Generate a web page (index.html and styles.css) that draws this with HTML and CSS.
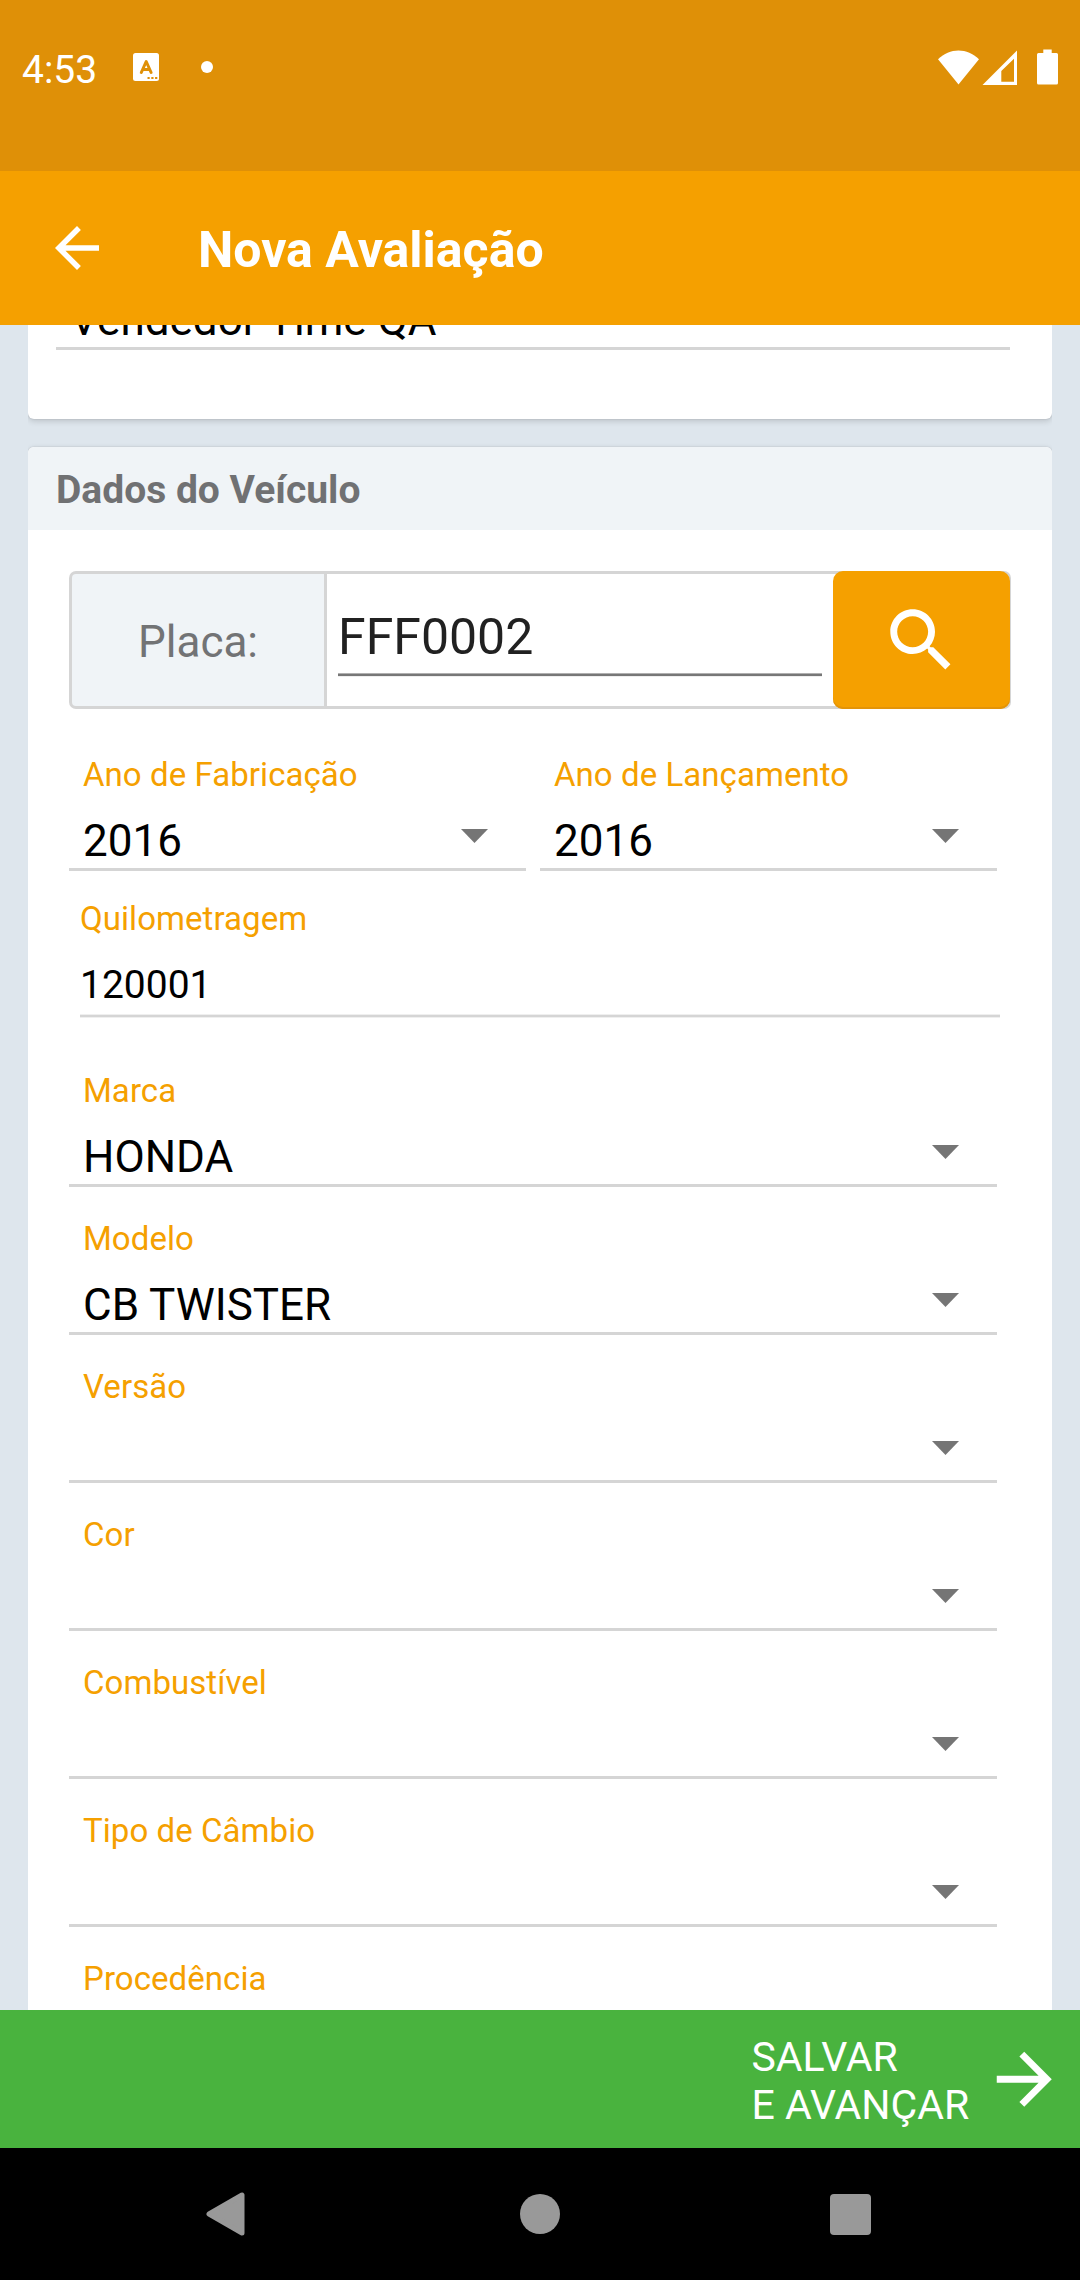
FILE: index.html
```html
<!DOCTYPE html>
<html lang="pt-BR">
<head>
<meta charset="utf-8">
<title>Nova Avaliação</title>
<link rel="stylesheet" href="styles.css">
</head>
<body>
<div class="screen">
  <header class="status-bar">
    <span class="clock">4:53</span>
    <svg class="status-app" width="26" height="28" viewBox="0 0 26 28">
      <rect width="26" height="28" rx="2.5" fill="#fff"/>
      <path d="M8.3 19.5 13.2 8.5 18.1 19.5M10 16.4H16.4" fill="none" stroke="#df9007" stroke-width="3" stroke-linejoin="round" stroke-linecap="round"/>
      <path d="M14.5 24h2.2v2h-2.2zM18.3 24h2.2v2h-2.2zM22.1 24h2.2v2h-2.2z" fill="#df9007"/>
    </svg>
    <span class="status-dot"></span>
    <svg class="status-icons" width="122" height="36" viewBox="0 0 122 36" fill="#fff">
      <path d="M0 10.3C6 4.500 13 1.500 20.500 1.500S35 4.500 41 10.300L20.500 35.500z"/>
      <path fill-rule="evenodd" d="M79 1.500V36H44.500zM76 9.700 63.300 22V32.700H76z"/>
      <path d="M105.300.5h8.400V4H118.500Q120 4 120 5.500V34Q120 35.500 118.500 35.500H100.500Q99 35.500 99 34V5.500Q99 4 100.500 4h4.800z"/>
    </svg>
  </header>
  <nav class="app-bar">
    <svg width="66" height="66" viewBox="0 0 24 24" fill="#fff"><path d="M20 11H7.830l5.590-5.590L12 4l-8 8 8 8 1.410-1.410L7.830 13H20z"/></svg>
    <h1 class="title">Nova Avaliação</h1>
  </nav>
  <main class="content">
    <section class="card card-seller">
      <div class="seller">Vendedor Time QA</div>
    </section>
    <section class="card card-vehicle">
      <h2 class="card-title">Dados do Veículo</h2>
      <div class="plate">
        <div class="plate-label">Placa:</div>
        <div class="plate-entry"><div class="plate-value">FFF0002</div></div>
        <div class="plate-button">
          <svg width="82.500" height="82.500" viewBox="0 0 24 24" fill="#fff"><path d="M15.500 14h-.79l-.28-.27C15.410 12.590 16 11.110 16 9.500 16 5.910 13.090 3 9.500 3S3 5.910 3 9.500 5.910 16 9.500 16c1.610 0 3.090-.59 4.230-1.570l.27.28v.79l5 4.990L20.490 19l-4.990-5zm-6 0C7.010 14 5 11.990 5 9.500S7.010 5 9.500 5 14 7.010 14 9.500 11.990 14 9.500 14z"/></svg>
        </div>
      </div>
      <div class="fields">
        <div class="field-row">
          <div class="field"><span class="label">Ano de Fabricação</span><div class="value">2016<i class="caret"></i></div></div>
          <div class="field"><span class="label">Ano de Lançamento</span><div class="value">2016<i class="caret"></i></div></div>
        </div>
        <div class="mileage"><span class="label">Quilometragem</span><div class="mileage-value">120001</div></div>
        <div class="field"><span class="label">Marca</span><div class="value">HONDA<i class="caret"></i></div></div>
        <div class="field"><span class="label">Modelo</span><div class="value">CB TWISTER<i class="caret"></i></div></div>
        <div class="field"><span class="label">Versão</span><div class="value"><i class="caret"></i></div></div>
        <div class="field"><span class="label">Cor</span><div class="value"><i class="caret"></i></div></div>
        <div class="field"><span class="label">Combustível</span><div class="value"><i class="caret"></i></div></div>
        <div class="field"><span class="label">Tipo de Câmbio</span><div class="value"><i class="caret"></i></div></div>
        <div class="field"><span class="label">Procedência</span><div class="value"><i class="caret"></i></div></div>
      </div>
    </section>
  </main>
  <div class="save-bar">
    <span class="save-text">SALVAR<br>E AVANÇAR</span>
    <svg width="82.500" height="82.500" viewBox="0 0 24 24" fill="#fff"><path d="M12 4l-1.410 1.410L16.170 11H4v2h12.170l-5.580 5.590L12 20l8-8z"/></svg>
  </div>
  <footer class="nav-bar">
    <svg width="40" height="46" viewBox="0 0 40 46"><path d="M3 23 36 4V42z" fill="#999" stroke="#999" stroke-width="5" stroke-linejoin="round"/></svg>
    <span class="nav-home"></span>
    <span class="nav-recent"></span>
  </footer>
</div>
</body>
</html>
```
FILE: styles.css
```css
* { box-sizing: border-box; }

body {
  margin: 0;
  font-family: Roboto, "Liberation Sans", sans-serif;
  color: #000;
}

svg { display: block; flex: none; }

.screen {
  display: flex;
  flex-direction: column;
  width: 1080px;
  height: 2280px;
  overflow: hidden;
}

/* Status bar */
.status-bar {
  flex: none;
  display: flex;
  align-items: center;
  height: 171px;
  padding: 0 20px 37px 22px;
  background: #df9007;
}

.clock {
  width: 111px;
  font-size: 39px;
  line-height: 50px;
  color: #fff;
  padding-top: 5px;
}

.status-dot {
  width: 12px;
  height: 12px;
  margin-left: 42px;
  border-radius: 50%;
  background: #fff;
}

.status-icons { margin-left: auto; }

/* App bar */
.app-bar {
  flex: none;
  display: flex;
  align-items: center;
  gap: 88px;
  height: 154px;
  padding-left: 44px;
  background: #f5a000;
}

.title {
  margin: 0;
  padding-top: 3px;
  font-size: 50px;
  line-height: 60px;
  font-weight: 700;
  color: #fff;
}

/* Scrolled form */
.content {
  flex: 1;
  min-height: 0;
  overflow: hidden;
  padding: 0 28px;
  background: #dee6ed;
}

.card {
  background: #fff;
  border-radius: 6px;
  box-shadow: 0 2px 6px rgba(0, 0, 0, 0.16), 0 0 2px rgba(0, 0, 0, 0.14);
  clip-path: inset(-4px 0 -10px 0);
}

.card-seller {
  height: 134px;
  margin: -40px 0 28px;
  padding: 9px 42px 0 28px;
}

.seller {
  height: 56px;
  padding-left: 14px;
  border-bottom: 3px solid #d5d5d5;
  font-size: 44px;
  line-height: 52px;
}

.card-title {
  height: 83px;
  margin: 0;
  padding: 18px 28px 0;
  border-radius: 6px 6px 0 0;
  background: #f0f4f7;
  font-size: 39px;
  line-height: 50px;
  font-weight: 700;
  color: #707173;
}

.plate {
  display: flex;
  width: 942px;
  height: 138px;
  margin: 41px 0 0 41px;
  border-radius: 7px;
  background: #d5d5d5;
  padding: 3px 0 3px 3px;
}

.plate-label {
  width: 252px;
  margin-right: 3px;
  border-radius: 4px 0 0 4px;
  background: #f0f4f7;
  font-size: 44px;
  line-height: 136px;
  text-align: center;
  color: #727375;
}

.plate-entry {
  flex: 1;
  margin-right: -9px;
  padding: 33px 20px 0 11px;
  background: #fff;
}

.plate-value {
  height: 70px;
  font-size: 50px;
  line-height: 60px;
  color: #212121;
  background: linear-gradient(#b0b0b0 1px, #777 1px, #777 3px, #eee 3px) bottom / 100% 4px no-repeat;
}

.plate-button {
  display: flex;
  align-items: center;
  justify-content: center;
  width: 177px;
  height: 138px;
  margin: -3px 1px -3px 0;
  border-radius: 10px;
  background: #f5a000;
  box-shadow: inset 0 -2px 0 #e39408;
}

.fields { margin: 14px 55px 0 41px; }

.field-row { display: flex; gap: 14px; }

.field-row .field { flex: 1; }

.field {
  height: 148px;
  padding: 32px 0 0 14px;
  border-bottom: 3px solid #d5d5d5;
}

.label {
  display: block;
  font-size: 33px;
  line-height: 40px;
  letter-spacing: 0.06px;
  color: #f5a000;
}

.value {
  display: flex;
  align-items: center;
  height: 52px;
  margin-top: 20px;
  font-size: 44px;
  line-height: 52px;
}

.caret {
  width: 27px;
  height: 14px;
  margin: 0 38px 10px auto;
  background: #757575;
  clip-path: polygon(0 0, 100% 0, 50% 100%);
}

.mileage {
  height: 168px;
  margin: 0 -3px 0 11px;
  padding-top: 28px;
}

.mileage-value {
  height: 58px;
  margin-top: 21px;
  font-size: 39px;
  line-height: 50px;
  background: linear-gradient(#efefef 1px, #d5d5d5 1px, #d5d5d5 3px, #efefef 3px) bottom / 100% 4px no-repeat;
}

/* Bottom action */
.save-bar {
  flex: none;
  display: flex;
  align-items: center;
  justify-content: flex-end;
  height: 138px;
  padding-right: 15px;
  background: #49b33e;
  color: #fff;
}

.save-text {
  width: 231px;
  padding-top: 3px;
  font-size: 41px;
  line-height: 48px;
}

/* System navigation */
.nav-bar {
  flex: none;
  display: flex;
  align-items: center;
  justify-content: space-between;
  height: 132px;
  padding: 0 209px 0 206px;
  background: #000;
}

.nav-home {
  width: 40px;
  height: 40px;
  margin-left: 3px;
  border-radius: 50%;
  background: #999;
}

.nav-recent {
  width: 41px;
  height: 41px;
  border-radius: 4px;
  background: #999;
}
```
